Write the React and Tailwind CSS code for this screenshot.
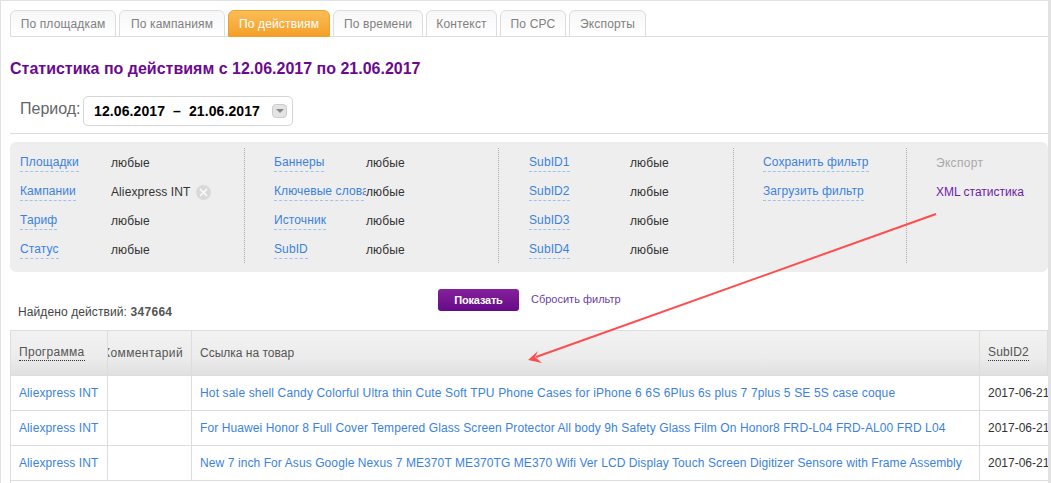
const sans = 'font-["Liberation_Sans",Arial,sans-serif]'

const tabs = [
  { label: 'По площадкам', w: 'w-[106px]' },
  { label: 'По кампаниям', w: 'w-[106px]' },
  { label: 'По действиям', w: 'w-[102px]', active: true },
  { label: 'По времени', w: 'w-[90px]' },
  { label: 'Контекст', w: 'w-[71px]' },
  { label: 'По CPC', w: 'w-[66px]' },
  { label: 'Экспорты', w: 'w-[77px]' },
]

const filterColumns = [
  {
    w: 'w-[235px]',
    pl: 'pl-[10px]',
    lw: 'w-[91px]',
    rows: [
      ['Площадки', 'любые'],
      ['Кампании', 'Aliexpress INT', true],
      ['Тариф', 'любые'],
      ['Статус', 'любые'],
    ],
  },
  {
    w: 'w-[254px]',
    pl: 'pl-[29px]',
    lw: 'w-[92px]',
    rows: [
      ['Баннеры', 'любые'],
      ['Ключевые слова', 'любые'],
      ['Источник', 'любые'],
      ['SubID', 'любые'],
    ],
  },
  {
    w: 'w-[235px]',
    pl: 'pl-[30px]',
    lw: 'w-[101px]',
    rows: [
      ['SubID1', 'любые'],
      ['SubID2', 'любые'],
      ['SubID3', 'любые'],
      ['SubID4', 'любые'],
    ],
  },
]

const rows = [
  {
    text: 'Hot sale shell Candy Colorful Ultra thin Cute Soft TPU Phone Cases for iPhone 6 6S 6Plus 6s plus 7 7plus 5 SE 5S case coque',
    tracking: 'tracking-[0.15px]',
  },
  {
    text: 'For Huawei Honor 8 Full Cover Tempered Glass Screen Protector All body 9h Safety Glass Film On Honor8 FRD-L04 FRD-AL00 FRD L04',
    tracking: 'tracking-[0.09px]',
  },
  {
    text: 'New 7 inch For Asus Google Nexus 7 ME370T ME370TG ME370 Wifi Ver LCD Display Touch Screen Digitizer Sensore with Frame Assembly',
    tracking: 'tracking-[0.09px]',
  },
]

function DashedLink({ children }) {
  return (
    <span className="block h-[18px] w-fit whitespace-nowrap border-b border-dashed border-[#9cc4f0] text-[12px] leading-[16px] tracking-[0.1px] text-[#3b82e0]">
      {children}
    </span>
  )
}

function FilterRow({ label, value, clear, lw }) {
  return (
    <div className="flex h-[29px] items-start">
      <div className={`${lw} shrink-0 overflow-hidden`}>
        <DashedLink>{label}</DashedLink>
      </div>
      <div className="flex items-center whitespace-nowrap pt-[1px] text-[12px] leading-[16px] tracking-[0.1px] text-[#333333]">
        {value}
        {clear && (
          <span className="ml-[6px] flex h-[15px] w-[15px] items-center justify-center rounded-full bg-[#d9d9d9]">
            <svg width="9" height="9" viewBox="0 0 9 9">
              <path d="M1 1l7 7M8 1l-7 7" stroke="#fff" strokeWidth="1.4" />
            </svg>
          </span>
        )}
      </div>
    </div>
  )
}

function Arrow() {
  return (
    <svg className="pointer-events-none absolute left-[-1px] top-[-1px]" width="1051" height="483">
      <line x1="936" y1="214" x2="536" y2="357" stroke="#ff4d4d" strokeWidth="2" />
      <polygon points="528,360 538,351 535,357 542,363" fill="#ff4d4d" />
    </svg>
  )
}

export default function App() {
  return (
    <div className={`${sans} relative h-[483px] w-[1051px] overflow-hidden border-l border-r-[3px] border-t border-[#e2e2e2] bg-white`}>
      <div className="ml-[9px] mt-[9px] flex h-[27px] gap-[3px] border-b border-[#dddddd]">
        {tabs.map((tab) => (
          <div
            key={tab.label}
            className={`${tab.w} flex h-[27px] items-center justify-center rounded-t-[6px] border text-[12px] tracking-[0.15px] ${
              tab.active
                ? 'border-[#eda12f] bg-gradient-to-b from-[#fbbd55] to-[#f4a027] text-white'
                : 'border-[#dddddd] bg-gradient-to-b from-[#f7f7f7] to-white text-[#808080]'
            }`}
          >
            {tab.label}
          </div>
        ))}
      </div>

      <h1 className="ml-[9px] mt-[22px] text-[16px] font-bold leading-[20px] text-[#6b0a8e]">
        Статистика по действиям с 12.06.2017 по 21.06.2017
      </h1>

      <div className="ml-[19px] mt-[17px] flex h-[30px] items-center">
        <span className="mb-[4px] w-[63px] text-[16px] leading-[20px] text-[#666666]">Период:</span>
        <div className="flex h-[30px] w-[210px] items-center justify-between rounded-[5px] border border-[#d5d5d5] pl-[10px] pr-[4px] text-[14px] font-bold tracking-[0.1px] text-black">
          <span className="whitespace-pre">12.06.2017  –  21.06.2017</span>
          <span className="mb-[1px] mr-[1px] flex h-[14px] w-[15px] items-center justify-center rounded-[4px] border border-[#cccccc] bg-[#e4e4e4]">
            <span className="h-0 w-0 border-x-[4px] border-t-[4px] border-x-transparent border-t-[#888888]" />
          </span>
        </div>
      </div>

      <div className="ml-[9px] mt-[7px] h-px bg-[#dddddd]" />

      <div className="ml-[9px] mt-[8px] flex h-[130px] rounded-[6px] bg-[#eeeeee] pb-[9px] pt-[6px]">
        {filterColumns.map((col, i) => (
          <div key={i} className={`${col.w} ${col.pl} border-r border-dotted border-[#aaaaaa] pt-[6px]`}>
            {col.rows.map(([label, value, clear]) => (
              <FilterRow key={label} label={label} value={value} clear={clear} lw={col.lw} />
            ))}
          </div>
        ))}
        <div className="w-[173px] border-r border-dotted border-[#aaaaaa] pl-[29px] pt-[6px]">
          <div className="h-[29px]">
            <DashedLink>Сохранить фильтр</DashedLink>
          </div>
          <div className="h-[29px]">
            <DashedLink>Загрузить фильтр</DashedLink>
          </div>
        </div>
        <div className="pl-[29px] pt-[7px] text-[12px] leading-[16px]">
          <div className="h-[29px] tracking-[0.3px] text-[#a8a8a8]">Экспорт</div>
          <div className="h-[29px] text-[#6b21a8]">XML статистика</div>
        </div>
      </div>

      <div className="relative ml-[17px] h-[58px]">
        <div className="absolute left-0 top-[32px] text-[12px] leading-[16px] tracking-[0.1px] text-[#444444]">
          Найдено действий: <b className="tracking-[0.3px] text-[#555555]">347664</b>
        </div>
        <div className="flex items-start pl-[420px] pt-[17px]">
          <div className="flex h-[22px] w-[81px] items-center justify-center rounded-[3px] bg-gradient-to-b from-[#85209b] to-[#650a86] text-[11px] font-bold tracking-[-0.2px] text-white">
            Показать
          </div>
          <span className="ml-[12px] pt-[2px] text-[11px] leading-[16px] text-[#6b3fa0]">Сбросить фильтр</span>
        </div>
      </div>

      <div className="ml-[9px]">
        <div className="flex h-[45px] border border-b-0 border-[#dddddd] bg-gradient-to-b from-[#f2f2f2] via-[#ececec] via-60% to-[#e0e0e0] text-[12px] text-[#555555]">
          <div className="flex w-[97px] shrink-0 items-center border-r border-[#dddddd] pl-[8px]">
            <span className="border-b border-dotted border-[#333333] leading-[15px] tracking-[0.3px]">Программа</span>
          </div>
          <div className="flex w-[84px] shrink-0 items-center justify-end overflow-hidden whitespace-nowrap border-r border-[#dddddd] pr-[8px] tracking-[0.4px]">
            Комментарий
          </div>
          <div className="flex w-[788px] shrink-0 items-center border-r border-[#dddddd] pl-[8px]">Ссылка на товар</div>
          <div className="flex items-center pl-[8px]">
            <span className="border-b border-dotted border-[#333333] leading-[15px] tracking-[0.15px]">SubID2</span>
          </div>
        </div>
        {rows.map((row) => (
          <div key={row.text} className="flex h-[35px] border-l border-t border-[#dddddd] text-[12px]">
            <div className="flex w-[97px] shrink-0 items-center border-r border-[#dddddd] pl-[8px] tracking-[0.1px] text-[#3b82e0]">Aliexpress INT</div>
            <div className="w-[84px] shrink-0 border-r border-[#dddddd]" />
            <div className={`${row.tracking} flex w-[788px] shrink-0 items-center whitespace-nowrap border-r border-[#dddddd] pl-[8px] text-[#3b82e0]`}>{row.text}</div>
            <div className="flex items-center whitespace-nowrap pl-[8px] text-[#333333]">2017-06-21</div>
          </div>
        ))}
        <div className="h-[3px] border-l border-t border-[#dddddd]" />
      </div>

      <Arrow />
    </div>
  )
}
